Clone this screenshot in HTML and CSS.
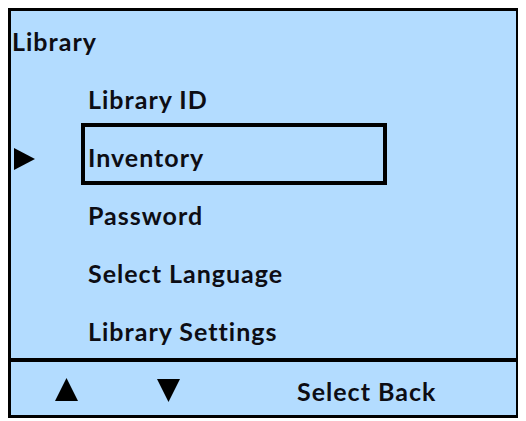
FILE: index.html
```html
<!DOCTYPE html>
<html lang="en">
<head>
<meta charset="utf-8">
<title>Library</title>
<link rel="stylesheet" href="styles.css">
</head>
<body>
<div class="screen">
  <div class="menu">
    <div class="title">Library</div>
    <div class="item"><span class="pointer"></span><span class="label">Library ID</span></div>
    <div class="item"><span class="pointer"><svg class="tri-right" width="21" height="22" viewBox="0 0 21 22"><polygon points="0,0 21,11 0,22"/></svg></span><span class="label selected">Inventory</span></div>
    <div class="item"><span class="pointer"></span><span class="label">Password</span></div>
    <div class="item"><span class="pointer"></span><span class="label">Select Language</span></div>
    <div class="item"><span class="pointer"></span><span class="label">Library Settings</span></div>
  </div>
  <div class="softkeys">
    <svg class="key-up" width="23" height="23" viewBox="0 0 23 23"><polygon points="11.5,0 23,23 0,23"/></svg>
    <svg class="key-down" width="23" height="23" viewBox="0 0 23 23"><polygon points="0,0 23,0 11.5,23"/></svg>
    <span class="key-labels"><span>Select</span> <span>Back</span></span>
  </div>
</div>
</body>
</html>
```
FILE: styles.css
```css
html, body {
  background: #ffffff;
}
body {
  margin: 8px;
  font-family: "Lato", "Open Sans", sans-serif;
  font-weight: 700;
  font-size: 25px;
  letter-spacing: 1px;
  color: #0d0d14;
}
.screen {
  width: 511px;
  height: 410px;
  box-sizing: border-box;
  border: 3px solid #000;
  background: #b3dcff;
  display: flex;
  flex-direction: column;
}
.menu {
  height: 347px;
  box-sizing: border-box;
  padding-top: 1px;
  flex: none;
}
.title {
  height: 58px;
  display: flex;
  align-items: center;
  padding-left: 1px;
  line-height: 30px;
}
.item {
  height: 58px;
  display: flex;
  align-items: center;
  padding-left: 3px;
  line-height: 30px;
}
.pointer {
  width: 74px;
  flex: none;
  display: flex;
  align-items: center;
  padding-top: 4px;
}
.pointer svg {
  display: block;
  fill: #000;
}
.label {
  display: block;
  white-space: nowrap;
}
.label.selected {
  box-sizing: border-box;
  width: 306px;
  height: 62px;
  border: 4px solid #000;
  margin-left: -7px;
  padding: 6px 3px 0 3px;
  margin-bottom: 6px;
  display: flex;
  align-items: center;
}
.softkeys {
  flex: 1;
  border-top: 4px solid #000;
  display: flex;
  align-items: center;
  padding-left: 44px;
  padding-top: 4px;
  line-height: 30px;
}
.softkeys svg {
  display: block;
  fill: #000;
  flex: none;
}
.key-up {
  margin-top: -2px;
}
.key-down {
  margin-left: 79px;
}
.key-labels {
  margin-left: 117px;
  white-space: nowrap;
}
```
